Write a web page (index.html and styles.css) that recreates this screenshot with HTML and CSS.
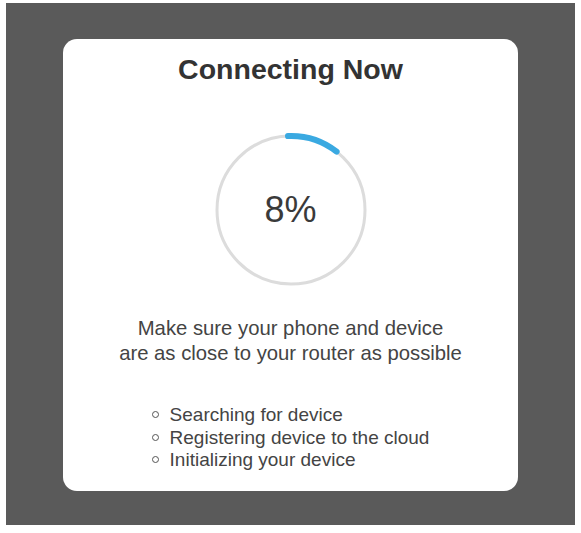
FILE: index.html
```html
<!DOCTYPE html>
<html lang="en">
<head>
    <meta charset="UTF-8">
    <meta name="viewport" content="width=device-width, initial-scale=1.0">
    <title>Connecting Now</title>
    <link rel="stylesheet" href="styles.css">
</head>
<body>

<div class="backdrop">
    <div class="card">
        <h2>Connecting Now</h2>

        <!-- progress ring -->
        <div class="ring">
            <svg width="154" height="154" viewBox="0 0 154 154">
                <circle cx="77" cy="77" r="74" fill="none" stroke="#dcdcdc" stroke-width="3"/>
                <path d="M 74 3.1 A 74 74 0 0 1 122.6 18.7" fill="none" stroke="#3aa9e1" stroke-width="6" stroke-linecap="round"/>
            </svg>
            <span class="percent">8%</span>
        </div>

        <p class="hint">Make sure your phone and device<br>are as close to your router as possible</p>

        <ul class="steps">
            <li>Searching for device</li>
            <li>Registering device to the cloud</li>
            <li>Initializing your device</li>
        </ul>
    </div>
</div>

</body>
</html>
```

FILE: styles.css
```css
body {
    font-family: 'Liberation Sans', Arial, sans-serif;
    background: #fff;
    margin: 0;
    padding: 0;
}

.backdrop {
    background: #5a5a5a;
    margin: 3px 6px 0;
    height: 522px;
    padding-top: 36px;
    box-sizing: border-box;
}

.card {
    background: #fff;
    width: 455px;
    height: 452px;
    margin: 0 auto;
    border-radius: 14px;
    padding-top: 14px;
    box-sizing: border-box;
    text-align: center;
}

h2 {
    font-size: 28.5px;
    line-height: 32px;
    font-weight: bold;
    color: #333;
    margin: 0;
}

.ring {
    position: relative;
    width: 154px;
    height: 154px;
    margin: 48px auto 0;
}

.ring svg {
    display: block;
}

.percent {
    position: absolute;
    left: 0;
    right: 0;
    top: 56px;
    font-size: 36px;
    line-height: 42px;
    color: #3a3a3a;
}

.hint {
    font-size: 20.3px;
    line-height: 25px;
    color: #444;
    margin: 29px 0 0;
}

.steps {
    display: inline-block;
    list-style: none;
    text-align: left;
    margin: 38px 0 0;
    padding: 0;
    font-size: 19px;
    line-height: 22.5px;
    color: #444;
}

.steps li {
    position: relative;
    padding-left: 18px;
}

.steps li::before {
    content: '';
    position: absolute;
    left: 0;
    top: 7px;
    width: 5px;
    height: 5px;
    border: 1.5px solid #555;
    border-radius: 50%;
}
```
